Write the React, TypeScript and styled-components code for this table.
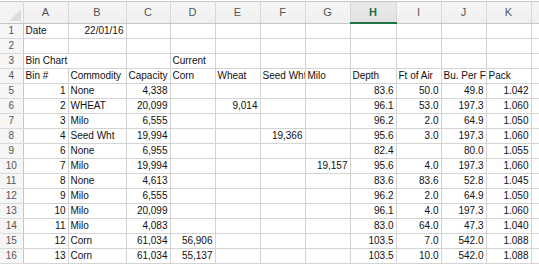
import styled, { createGlobalStyle } from "styled-components";

const GlobalStyle = createGlobalStyle`
  html, body {
    margin: 0;
    padding: 0;
    background: #ffffff;
    overflow: hidden;
  }
  body {
    font-family: "Liberation Sans", Arial, sans-serif;
  }
`;

const columns = ["A", "B", "C", "D", "E", "F", "G", "H", "I", "J", "K", "L"];
const widths = [45, 58, 44, 45, 45, 45, 45, 46, 45, 45, 45, 8];
const selectedCol = "H";

type Cell = string | { v: string; num?: boolean; span?: number } | null;

const n = (v: string) => ({ v, num: true });

const rows: Cell[][] = [
  ["Date", n("22/01/16")],
  [],
  [{ v: "Bin Chart", span: 2 }, null, null, "Current"],
  ["Bin #", "Commodity", "Capacity", "Corn", "Wheat", "Seed Wht", "Milo", "Depth", "Ft of Air", "Bu. Per Ft", "Pack"],
  [n("1"), "None", n("4,338"), null, null, null, null, n("83.6"), n("50.0"), n("49.8"), n("1.042")],
  [n("2"), "WHEAT", n("20,099"), null, n("9,014"), null, null, n("96.1"), n("53.0"), n("197.3"), n("1.060")],
  [n("3"), "Milo", n("6,555"), null, null, null, null, n("96.2"), n("2.0"), n("64.9"), n("1.050")],
  [n("4"), "Seed Wht", n("19,994"), null, null, n("19,366"), null, n("95.6"), n("3.0"), n("197.3"), n("1.060")],
  [n("6"), "None", n("6,955"), null, null, null, null, n("82.4"), null, n("80.0"), n("1.055")],
  [n("7"), "Milo", n("19,994"), null, null, null, n("19,157"), n("95.6"), n("4.0"), n("197.3"), n("1.060")],
  [n("8"), "None", n("4,613"), null, null, null, null, n("83.6"), n("83.6"), n("52.8"), n("1.045")],
  [n("9"), "Milo", n("6,555"), null, null, null, null, n("96.2"), n("2.0"), n("64.9"), n("1.050")],
  [n("10"), "Milo", n("20,099"), null, null, null, null, n("96.1"), n("4.0"), n("197.3"), n("1.060")],
  [n("11"), "Milo", n("4,083"), null, null, null, null, n("83.0"), n("64.0"), n("47.3"), n("1.040")],
  [n("12"), "Corn", n("61,034"), n("56,906"), null, null, null, n("103.5"), n("7.0"), n("542.0"), n("1.088")],
  [n("13"), "Corn", n("61,034"), n("55,137"), null, null, null, n("103.5"), n("10.0"), n("542.0"), n("1.088")],
];

export default function App() {
  return (
    <>
      <GlobalStyle />
      <Sheet>
        <colgroup>
          <col style={{ width: 23 }} />
          {widths.map((w, i) => (
            <col key={i} style={{ width: w }} />
          ))}
        </colgroup>
        <thead>
          <tr>
            <Corner>
              <CornerMark />
            </Corner>
            {columns.map((c) => (
              <ColHead key={c} $selected={c === selectedCol}>
                {c === "L" ? "" : c}
              </ColHead>
            ))}
          </tr>
        </thead>
        <tbody>
          {rows.map((row, r) => {
            const cells: JSX.Element[] = [];
            let skip = 0;
            for (let i = 0; i < columns.length; i++) {
              if (skip > 0) {
                skip--;
                continue;
              }
              const cell = row[i];
              if (cell && typeof cell === "object") {
                const span = cell.span ?? 1;
                skip = span - 1;
                cells.push(
                  <Td key={i} colSpan={span} $num={cell.num}>
                    {cell.v}
                  </Td>
                );
              } else {
                cells.push(<Td key={i}>{cell ?? ""}</Td>);
              }
            }
            return (
              <tr key={r}>
                <RowHead>{r + 1}</RowHead>
                {cells}
              </tr>
            );
          })}
        </tbody>
      </Sheet>
    </>
  );
}

const Sheet = styled.table`
  border-collapse: collapse;
  table-layout: fixed;
  width: 539px;
  margin-top: 1px;
  border-top: 1px solid #c8c8c8;
  font-size: 10px;
  line-height: 14px;
`;

const Corner = styled.th`
  position: relative;
  height: 20px;
  padding: 0;
  background: #f3f3f3;
  border-right: 1px solid #d8d8d8;
  border-bottom: 1px solid #c6c6c6;
`;

const CornerMark = styled.div`
  position: absolute;
  right: 2px;
  bottom: 2px;
  width: 0;
  height: 0;
  border-left: 12px solid transparent;
  border-bottom: 12px solid #dcdcdc;
`;

const ColHead = styled.th<{ $selected?: boolean }>`
  height: 20px;
  padding: 0;
  font-size: 11px;
  font-weight: ${(p) => (p.$selected ? 700 : 400)};
  color: ${(p) => (p.$selected ? "#217346" : "#555555")};
  text-align: center;
  background: ${(p) =>
    p.$selected
      ? "linear-gradient(#eaeaea, #e1e1e1)"
      : "linear-gradient(#f6f6f6, #efefef)"};
  border-right: 1px solid #d8d8d8;
  border-bottom: ${(p) => (p.$selected ? "2px solid #217346" : "1px solid #c6c6c6")};
`;

const RowHead = styled.th`
  height: 14px;
  padding: 0;
  font-size: 10px;
  font-weight: 400;
  color: #555555;
  text-align: center;
  background: #f6f6f6;
  border-right: 1px solid #c6c6c6;
  border-bottom: 1px solid #dadada;
`;

const Td = styled.td<{ $num?: boolean }>`
  height: 14px;
  padding: 0 2px;
  color: #111111;
  border-right: 1px solid #d4d4d4;
  border-bottom: 1px solid #d4d4d4;
  white-space: nowrap;
  overflow: hidden;
  text-align: ${(p) => (p.$num ? "right" : "left")};
`;
